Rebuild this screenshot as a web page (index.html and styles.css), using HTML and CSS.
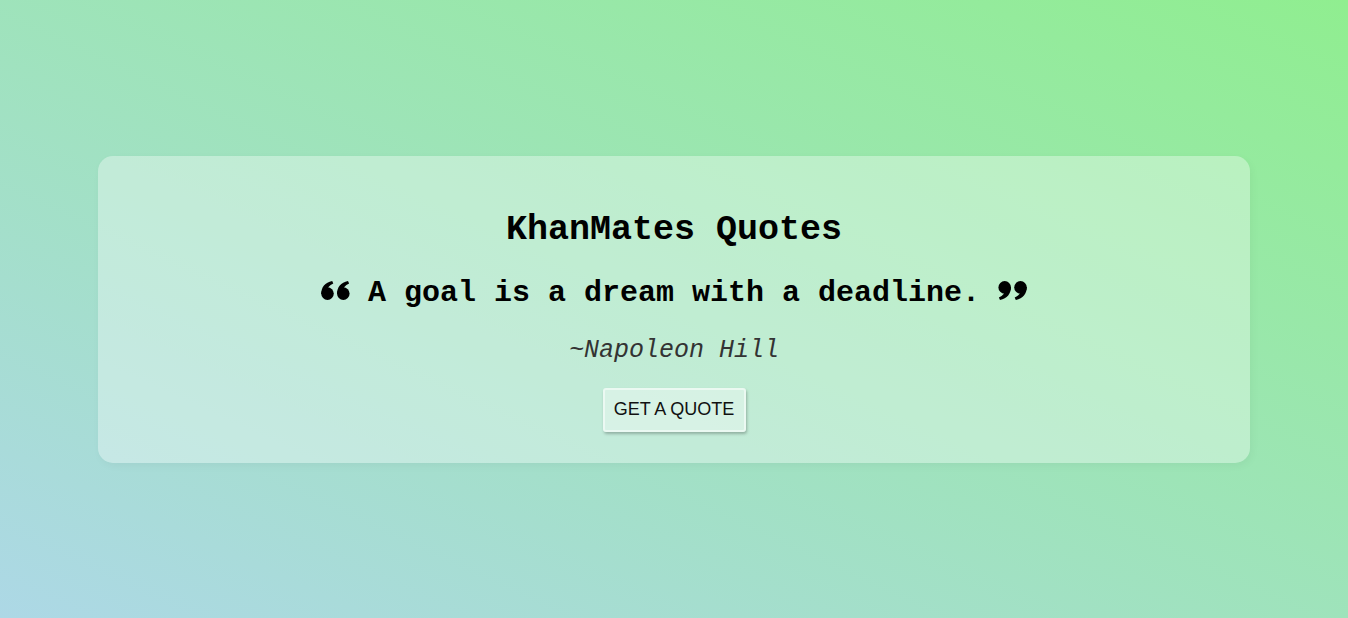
FILE: index.html
```html
<!DOCTYPE html>
<html lang="en">
<head>
<meta charset="utf-8">
<title>KhanMates Quotes</title>
<link rel="stylesheet" href="styles.css">
</head>
<body>
<main class="page">
  <section class="card">
    <h1 class="title">KhanMates Quotes</h1>
    <p class="quote">
      <svg class="qicon" viewBox="0 0 29 19" aria-hidden="true">
        <g><circle cx="6.5" cy="12.6" r="6.3"/><path d="M0.25 13.2 C0.1 6.2 4 1.6 11.2 0 L12.3 2.6 C8.2 4.3 6.3 7 6.4 9.5 Z"/></g>
        <g transform="translate(15.8 0)"><circle cx="6.5" cy="12.6" r="6.3"/><path d="M0.25 13.2 C0.1 6.2 4 1.6 11.2 0 L12.3 2.6 C8.2 4.3 6.3 7 6.4 9.5 Z"/></g>
      </svg>
      <span class="qtext">A goal is a dream with a deadline.</span>
      <svg class="qicon" viewBox="0 0 29 19" aria-hidden="true">
        <g transform="rotate(180 14.5 9.5)">
          <g><circle cx="6.5" cy="12.6" r="6.3"/><path d="M0.25 13.2 C0.1 6.2 4 1.6 11.2 0 L12.3 2.6 C8.2 4.3 6.3 7 6.4 9.5 Z"/></g>
          <g transform="translate(15.8 0)"><circle cx="6.5" cy="12.6" r="6.3"/><path d="M0.25 13.2 C0.1 6.2 4 1.6 11.2 0 L12.3 2.6 C8.2 4.3 6.3 7 6.4 9.5 Z"/></g>
        </g>
      </svg>
    </p>
    <p class="author">~Napoleon Hill</p>
    <button class="btn" type="button">GET A QUOTE</button>
  </section>
</main>
</body>
</html>
```
FILE: styles.css
```css
html, body {
  margin: 0;
  padding: 0;
  height: 100%;
}
body {
  background: linear-gradient(to top right, #add8e6, #90ee90);
  font-family: "Liberation Mono", "Courier New", monospace;
  color: #000;
}
.page {
  height: 100%;
  display: flex;
  align-items: center;
  justify-content: center;
}
.card {
  width: 1152px;
  box-sizing: border-box;
  background: rgba(255, 255, 255, 0.35);
  border-radius: 15px;
  box-shadow: 2px 3px 8px rgba(0, 0, 0, 0.04);
  display: flex;
  flex-direction: column;
  align-items: center;
  padding: 54px 20px 31px;
}
.title {
  margin: 0;
  font-size: 35px;
  font-weight: bold;
  line-height: 40px;
}
.quote {
  margin: 26px 0 0;
  display: flex;
  align-items: center;
  gap: 18px;
  font-size: 30px;
  font-weight: bold;
  line-height: 34px;
}
.qicon {
  width: 29px;
  height: 19px;
  fill: #000;
  margin-top: -4px;
}
.author {
  margin: 27px 0 0;
  font-size: 25px;
  font-style: italic;
  color: #333;
  line-height: 28px;
}
.btn {
  margin-top: 23px;
  width: 143px;
  height: 44px;
  font-family: "Liberation Sans", Arial, sans-serif;
  font-size: 18px;
  color: #111;
  background: rgba(255, 255, 255, 0.35);
  border: 2px solid rgba(255, 255, 255, 0.5);
  border-radius: 3px;
  box-shadow: 1px 2px 3px rgba(0, 0, 0, 0.25);
  padding: 0;
  cursor: pointer;
}
```
